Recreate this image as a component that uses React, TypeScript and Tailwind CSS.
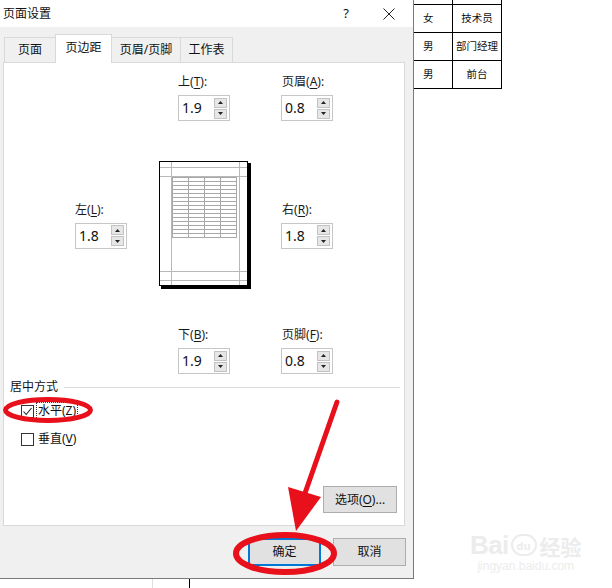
import React from "react";

const FONT = { fontFamily: "'Noto Sans', 'Noto Sans CJK SC', sans-serif" };

function Tri({ up }: { up: boolean }) {
  return (
    <svg width="5" height="3" viewBox="0 0 5 3">
      {up ? <polygon points="2.5,0 5,3 0,3" fill="#222" /> : <polygon points="0,0 5,0 2.5,3" fill="#222" />}
    </svg>
  );
}

function Spin({ pre, k, value, indent }: { pre: string; k: string; value: string; indent?: boolean }) {
  return (
    <div className="flex flex-col w-[52px]">
      <div className={`text-[12px] leading-[16px] text-[#1a1a1a] whitespace-nowrap ${indent ? "pl-px" : ""}`}>
        {pre}(<span className="underline underline-offset-2">{k}</span>):
      </div>
      <div className="mt-[5px] w-[52px] h-[26px] border border-[#c6c6c6] bg-white flex items-center justify-between pl-[3px] pr-[2px]">
        <span className="text-[14px] leading-none text-[#111]">{value}</span>
        <div className="flex flex-col gap-px w-[13px]">
          <div className="h-[10px] bg-[#e6e6e6] border border-[#c2c2c2] flex items-center justify-center">
            <Tri up />
          </div>
          <div className="h-[10px] bg-[#e6e6e6] border border-[#c2c2c2] flex items-center justify-center">
            <Tri up={false} />
          </div>
        </div>
      </div>
    </div>
  );
}

function Preview() {
  const rows = [];
  for (let y = 16; y <= 76; y += 4) rows.push(y);
  const cols = [13, 29, 45, 61, 77];
  return (
    <svg width="92" height="128" viewBox="0 0 92 128" className="block">
      <rect x="2" y="2" width="90" height="126" fill="#000" />
      <rect x="0.5" y="0.5" width="88" height="124" fill="#fff" stroke="#000" />
      {[12.5, 80.5].map((x) => (
        <line key={"v" + x} x1={x} y1="1" x2={x} y2="124" stroke="#b8b8b8" />
      ))}
      {[6.5, 15.5, 110.5, 119.5].map((y) => (
        <line key={"h" + y} x1="1" y1={y} x2="88" y2={y} stroke="#b8b8b8" />
      ))}
      {rows.map((y) => (
        <line key={"r" + y} x1="13" y1={y + 0.5} x2="77" y2={y + 0.5} stroke="#a8a8a8" />
      ))}
      {cols.map((x) => (
        <line key={"c" + x} x1={x + 0.5} y1="16" x2={x + 0.5} y2="77" stroke="#a8a8a8" />
      ))}
    </svg>
  );
}

function Check({ checked }: { checked: boolean }) {
  return (
    <div className="w-[13px] h-[13px] border border-[#333] bg-white flex items-center justify-center">
      {checked && (
        <svg width="11" height="11" viewBox="0 0 11 11">
          <polyline points="1.5,5.5 4.2,8.5 9.5,2" fill="none" stroke="#222" strokeWidth="1.1" />
        </svg>
      )}
    </div>
  );
}

export default function App() {
  return (
    <div className="relative w-[612px] h-[588px] bg-white overflow-hidden text-[#111]" style={FONT}>
      <div className="flex">
        {/* Dialog */}
        <div className="w-[414px] h-[579px] border-r border-b border-[#7a7a7a] flex flex-col">
          {/* Title bar */}
          <div className="h-[27px] bg-white flex items-center pl-[3px] pr-[18px]">
            <span className="text-[12px] leading-none">页面设置</span>
            <span className="ml-auto mr-[34px] text-[13px] leading-none">?</span>
            <svg width="12" height="12" viewBox="0 0 12 12">
              <line x1="0.5" y1="0.5" x2="11.5" y2="11.5" stroke="#222" strokeWidth="1" />
              <line x1="11.5" y1="0.5" x2="0.5" y2="11.5" stroke="#222" strokeWidth="1" />
            </svg>
          </div>
          {/* Body */}
          <div className="flex-1 bg-[#f0f0f0] flex flex-col">
            {/* Tabs */}
            <div className="h-[36px] flex items-end pl-[4px] relative z-10 -mb-px">
              <div className="w-[52px] h-[25px] mb-px border border-[#d9d9d9] border-b-0 bg-[#f0f0f0] flex items-center justify-center text-[12px]">页面</div>
              <div className="w-[57px] h-[29px] -ml-px border border-[#d9d9d9] border-b-0 bg-white flex items-center justify-center text-[12px] pb-[2px]">页边距</div>
              <div className="w-[70px] h-[25px] mb-px -ml-px border border-[#d9d9d9] border-b-0 bg-[#f0f0f0] flex items-center justify-center text-[12px]">页眉/页脚</div>
              <div className="w-[53px] h-[25px] mb-px -ml-px border border-[#d9d9d9] border-b-0 bg-[#f0f0f0] flex items-center justify-center text-[12px]">工作表</div>
            </div>
            {/* Panel */}
            <div className="ml-[3px] w-[402px] h-[464px] border border-[#d9d9d9] bg-white flex flex-col">
              <div className="mt-[11px] ml-[174px] flex gap-[51px]">
                <Spin pre="上" k="T" value="1.9" />
                <Spin pre="页眉" k="A" value="0.8" indent />
              </div>
              <div className="mt-[40px] ml-[71px] flex items-center">
                <Spin pre="左" k="L" value="1.8" />
                <div className="ml-[32px]">
                  <Preview />
                </div>
                <div className="ml-[30px]">
                  <Spin pre="右" k="R" value="1.8" indent />
                </div>
              </div>
              <div className="mt-[38px] ml-[174px] flex gap-[51px]">
                <Spin pre="下" k="B" value="1.9" />
                <Spin pre="页脚" k="F" value="0.8" indent />
              </div>
              <div className="mt-[5px] pl-[6px] pr-[4px] flex items-center">
                <span className="text-[12px] leading-[16px]">居中方式</span>
                <div className="ml-[6px] flex-1 h-px bg-[#dcdcdc]" />
              </div>
              <div className="mt-[6px] pl-[17px] h-[20px] flex items-center">
                <Check checked />
                <span className="ml-[3px] text-[12px] leading-[16px] px-px outline outline-1 outline-dotted outline-[#333]">
                  水平(<span className="underline underline-offset-2">Z</span>)
                </span>
              </div>
              <div className="mt-[8px] pl-[17px] h-[20px] flex items-center">
                <Check checked={false} />
                <span className="ml-[4px] text-[12px] leading-[16px]">
                  垂直(<span className="underline underline-offset-2">V</span>)
                </span>
              </div>
              <div className="mt-[37px] mr-[7px] flex justify-end">
                <div className="w-[74px] h-[27px] bg-[#e1e1e1] border border-[#adadad] flex items-center justify-center text-[12px]">
                  选项(<span className="underline underline-offset-2">O</span>)...
                </div>
              </div>
            </div>
            {/* Footer buttons */}
            <div className="flex-1 flex items-center justify-end gap-[12px] pr-[7px]">
              <div className="w-[73px] h-[28px] bg-[#e1e1e1] border-2 border-[#0078d7] flex items-center justify-center text-[12px]">确定</div>
              <div className="w-[73px] h-[28px] bg-[#e1e1e1] border border-[#adadad] flex items-center justify-center text-[12px]">取消</div>
            </div>
          </div>
        </div>
        {/* Spreadsheet fragment */}
        <div className="flex flex-col text-[10.5px] leading-none">
          <div className="flex h-[5px] border-b border-black">
            <div className="w-[39px] border-r border-black" />
            <div className="w-[49px] border-r border-black" />
          </div>
          {[
            ["女", "技术员"],
            ["男", "部门经理"],
            ["男", "前台"],
          ].map(([a, b], i) => (
            <div key={i} className="flex h-[28px] border-b border-black">
              <div className="w-[39px] border-r border-black flex items-center pl-[9px]">{a}</div>
              <div className="w-[49px] border-r border-black flex items-center justify-center">{b}</div>
            </div>
          ))}
        </div>
      </div>
      {/* Strip below dialog */}
      <div className="flex h-[9px]">
        <div className="w-[153px] border-r border-[#dedede]" />
        <div className="w-[37px] border-r border-black" />
      </div>

      {/* Watermark */}
      <div className="absolute left-[470px] top-[532px] flex flex-col items-center text-[#ececec] pointer-events-none">
        <div className="flex items-end leading-none">
          <span className="text-[26px] font-bold tracking-tight" style={{ fontFamily: "'Liberation Sans', sans-serif" }}>Bai</span>
          <span className="ml-[2px] mb-[2px] w-[26px] h-[22px] rounded-full border-2 border-[#ececec] flex items-center justify-center text-[11px] font-bold">du</span>
          <span className="ml-[3px] text-[21px] font-bold">经验</span>
        </div>
        <span className="mt-[2px] text-[12px] leading-none" style={{ fontFamily: "'Liberation Sans', sans-serif" }}>jingyan.baidu.com</span>
      </div>

      {/* Red annotations */}
      <svg className="absolute left-0 top-0 pointer-events-none" width="612" height="588" viewBox="0 0 612 588">
        <ellipse cx="48" cy="410" rx="42.5" ry="10.5" fill="none" stroke="#e8101a" strokeWidth="5" />
        <ellipse cx="285" cy="553.5" rx="49" ry="18.5" fill="none" stroke="#e8101a" strokeWidth="6" />
        <line x1="337" y1="402" x2="304" y2="496" stroke="#e8101a" strokeWidth="5" strokeLinecap="round" />
        <polygon points="288,487 321,497 296,531" fill="#e8101a" />
      </svg>
    </div>
  );
}
